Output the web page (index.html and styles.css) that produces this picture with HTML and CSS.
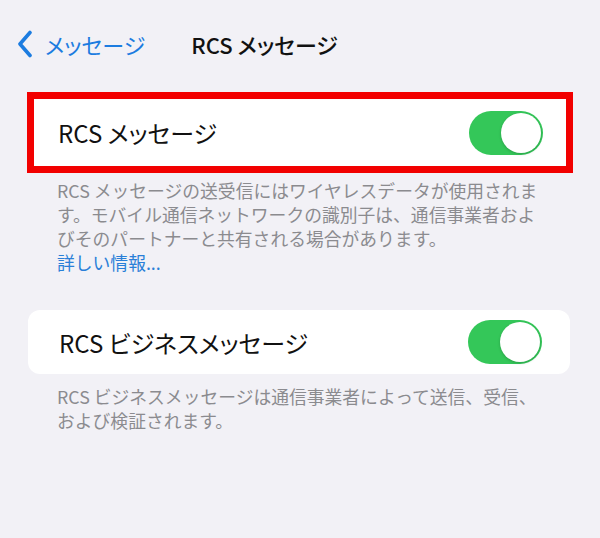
FILE: index.html
```html
<!DOCTYPE html>
<html lang="ja">
    <head>
        <meta charset="utf-8">
        <title>RCSメッセージ</title>
        <link rel="stylesheet" href="styles.css">
    </head>
    <body>
        <div class="nav">
            <a class="back" href="#">
                <svg class="chevron" width="16" height="28" viewBox="0 0 16 28">
                    <path d="M13 2.5 L3 14 L13 25.5" fill="none" stroke="#1c7ce0" stroke-width="3.6" stroke-linecap="round" stroke-linejoin="round"/>
                </svg>
                <span>メッセージ</span>
            </a>
            <div class="title">RCS メッセージ</div>
        </div>

        <div class="group">
            <div class="card highlight">
                <span class="label">RCS メッセージ</span>
                <div class="switch on"><div class="knob"></div></div>
            </div>
            <p class="note">
                RCS メッセージの送受信にはワイヤレスデータが使用されま<br>
                す。モバイル通信ネットワークの識別子は、通信事業者およ<br>
                びそのパートナーと共有される場合があります。<br>
                <a href="#">詳しい情報...</a>
            </p>
        </div>

        <div class="group second">
            <div class="card">
                <span class="label">RCS ビジネスメッセージ</span>
                <div class="switch on"><div class="knob"></div></div>
            </div>
            <p class="note">
                RCS ビジネスメッセージは通信事業者によって送信、受信、<br>
                および検証されます。
            </p>
        </div>
    </body>
</html>
```

FILE: styles.css
```css
body {
    margin: 0;
    background-color: #f2f1f6;
    font-family: "Noto Sans CJK JP", "Noto Sans", sans-serif;
    color: #111;
}
.nav {
    display: flex;
    align-items: center;
    height: 88px;
    padding-left: 17px;
    gap: 46px;
}
.back {
    display: flex;
    align-items: center;
    gap: 12px;
    color: #1c7ce0;
    text-decoration: none;
    font-size: 22px;
    font-feature-settings: "palt";
}
.chevron {
    display: block;
}
.title {
    font-size: 22px;
    font-weight: 500;
    font-feature-settings: "palt";
}
.group {
    margin: 4px 27px 0 27px;
}
.group.second {
    margin-top: 36px;
}
.card {
    display: flex;
    align-items: center;
    justify-content: space-between;
    height: 64px;
    padding: 0 28px 0 31px;
    background-color: #fff;
    border-radius: 12px;
    margin: 0 3px 0 1px;
}
.card.highlight {
    height: 67px;
    border: 7px solid #f20000;
    border-radius: 0;
    margin: 0;
    padding: 0 23px 0 24px;
}
.label {
    font-size: 24px;
    font-feature-settings: "palt";
}
.switch {
    display: flex;
    align-items: center;
    width: 74px;
    height: 44px;
    padding: 2px;
    box-sizing: border-box;
    border-radius: 22px;
    background-color: #d9d9dd;
}
.switch.on {
    background-color: #34c759;
    justify-content: flex-end;
}
.knob {
    width: 40px;
    height: 40px;
    border-radius: 50%;
    background-color: #fff;
    box-shadow: 0 1px 3px rgba(0, 0, 0, 0.2);
}
.note {
    margin: 5px 0 0 0;
    padding-left: 30px;
    font-size: 17.8px;
    line-height: 24px;
    color: #8b8b8f;
}
.second .note {
    margin-top: 10px;
}
.note a {
    color: #2a7fd8;
    text-decoration: none;
}
```
